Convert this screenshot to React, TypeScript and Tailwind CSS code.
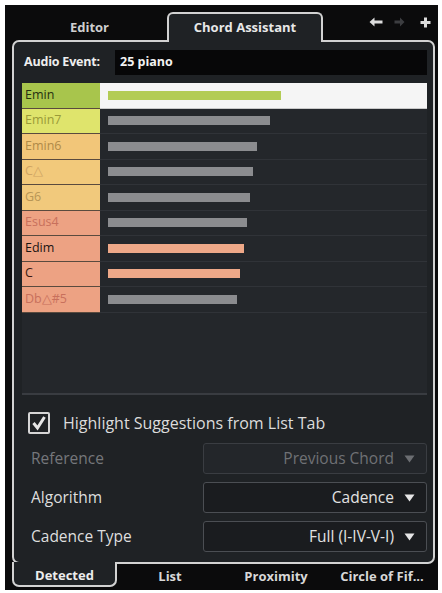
import React from "react";

type Chord = {
  name: string;
  cell: string;
  text: string;
  bar: string;
  width: number;
  selected?: boolean;
};

const chords: Chord[] = [
  { name: "Emin", cell: "bg-[#a8c54c]", text: "text-[#263010]", bar: "bg-[#b3cc55]", width: 173, selected: true },
  { name: "Emin7", cell: "bg-[#dfe46c]", text: "text-[#9a9a38]", bar: "bg-[#8b8c8f]", width: 162 },
  { name: "Emin6", cell: "bg-[#f2c679]", text: "text-[#b08a48]", bar: "bg-[#8b8c8f]", width: 149 },
  { name: "C\u25B3", cell: "bg-[#f2c97b]", text: "text-[#cfa463]", bar: "bg-[#8b8c8f]", width: 145 },
  { name: "G6", cell: "bg-[#f1c97c]", text: "text-[#b89656]", bar: "bg-[#8b8c8f]", width: 142 },
  { name: "Esus4", cell: "bg-[#eda283]", text: "text-[#c8705c]", bar: "bg-[#8b8c8f]", width: 139 },
  { name: "Edim", cell: "bg-[#eda283]", text: "text-[#1c1412]", bar: "bg-[#eea888]", width: 136 },
  { name: "C", cell: "bg-[#eda283]", text: "text-[#3a1a12]", bar: "bg-[#eea888]", width: 132 },
  { name: "Db\u25B3#5", cell: "bg-[#eda283]", text: "text-[#c8705c]", bar: "bg-[#8b8c8f]", width: 129 },
];

const font = { fontFamily: '"Open Sans", "Noto Sans", sans-serif' };

function DownTriangle({ dim }: { dim?: boolean }) {
  return (
    <svg width="11" height="8" viewBox="0 0 11 8" className="ml-[10px] shrink-0">
      <path d="M0.5 0.5 H10.5 L5.5 7.5 Z" fill={dim ? "#6c6e72" : "#e6e6e6"} />
    </svg>
  );
}

function Dropdown({
  label,
  value,
  disabled,
}: {
  label: string;
  value: string;
  disabled?: boolean;
}) {
  return (
    <div className="flex items-center h-[31px]">
      <div
        className={`w-[181px] pl-[9px] text-[15.5px] ${disabled ? "text-[#75777b]" : "text-[#dedede]"}`}
      >
        {label}
      </div>
      <div
        className={`flex-1 h-full flex items-center justify-end pr-[11px] rounded-[3px] border text-[15.5px] ${
          disabled
            ? "border-[#3a3d42] bg-[#23262a] text-[#6f7175]"
            : "border-[#4b4e53] bg-[#1a1c1f] text-[#e2e2e2]"
        }`}
      >
        <span>{value}</span>
        <DownTriangle dim={disabled} />
      </div>
    </div>
  );
}

export default function App() {
  return (
    <div className="w-[442px] h-[593px] bg-white pt-[5px] pl-[5px] pr-[4px] pb-[3px]" style={font}>
      <div className="h-full bg-[#0b0b0c] flex flex-col pl-[7px] pr-[3px] pt-[7px]">
        {/* top tab strip */}
        <div className="flex h-[28px] shrink-0">
          <div className="w-[155px] flex items-center justify-center pt-[3px] text-[13px] font-bold text-[#cfcfcf]">
            Editor
          </div>
          <div className="relative z-10 w-[156px] h-[30px] border-2 border-b-0 border-[#d2d2d2] rounded-t-[6px] bg-[#1f2225] flex items-center justify-center pb-[1px] text-[13px] font-bold text-[#e8e8e8]">
            Chord Assistant
          </div>
          <div className="flex-1 flex items-start justify-end pt-[5px] pr-[4px] gap-[11px]">
            <svg width="14" height="10" viewBox="0 0 14 10">
              <path d="M5.5 0.5 L0.5 5 L5.5 9.5 V6.5 H13.5 V3.5 H5.5 Z" fill="#dcdcdc" />
            </svg>
            <svg width="11" height="10" viewBox="0 0 11 10">
              <path d="M6 0.5 L10.5 5 L6 9.5 V6.5 H0.5 V3.5 H6 Z" fill="#3c3d40" />
            </svg>
            <svg width="11" height="11" viewBox="0 0 11 11" className="ml-[4px]">
              <path d="M4 0.5 H7 V4 H10.5 V7 H7 V10.5 H4 V7 H0.5 V4 H4 Z" fill="#dcdcdc" />
            </svg>
          </div>
        </div>

        {/* panel */}
        <div className="h-[524px] shrink-0 border-2 border-[#d2d2d2] rounded-[7px] bg-[#1f2225] flex flex-col pl-[8px] pr-[6px] pt-[8px]">
          <div className="flex items-center h-[25px] shrink-0">
            <div className="w-[93px] pl-[2px] text-[12.5px] font-bold text-[#eeeeee] tracking-[-0.2px]">
              Audio Event:
            </div>
            <div className="flex-1 h-full bg-[#070708] flex items-center pl-[5px] text-[12.5px] font-bold text-[#f2f2f2]">
              25 piano
            </div>
          </div>

          {/* chord list */}
          <div className="mt-[8px] h-[312px] shrink-0 bg-[#24272b] border-b-2 border-[#393c41] flex flex-col">
            {chords.map((c) => (
              <div key={c.name} className="flex h-[25.5px] shrink-0">
                <div
                  className={`w-[78px] ${c.cell} ${c.text} border-b border-[#5a4a3e] flex items-center pl-[3px] text-[12.5px]`}
                >
                  {c.name}
                </div>
                <div
                  className={`flex-1 flex items-center pl-[8px] border-b ${
                    c.selected ? "bg-[#f5f5f5] border-[#c9c9c9]" : "border-[#303338]"
                  }`}
                >
                  <div className={`h-[9px] ${c.bar}`} style={{ width: c.width }} />
                </div>
              </div>
            ))}
          </div>

          {/* options */}
          <div className="flex items-center mt-[16px] h-[23px] pl-[6px]">
            <div className="w-[22px] h-[22px] border-2 border-[#d6d6d6] rounded-[2px] flex items-center justify-center bg-[#1f2225]">
              <svg width="16" height="16" viewBox="0 0 16 16">
                <path d="M2.5 8 L6.5 13 L13.5 2" stroke="#e6e6e6" strokeWidth="3" fill="none" />
              </svg>
            </div>
            <span className="ml-[13px] text-[16px] text-[#dcdcdc]">Highlight Suggestions from List Tab</span>
          </div>

          <div className="mt-[9px] flex flex-col gap-[8px]">
            <Dropdown label="Reference" value="Previous Chord" disabled />
            <Dropdown label="Algorithm" value="Cadence" />
            <Dropdown label="Cadence Type" value="Full (I-IV-V-I)" />
          </div>
        </div>

        {/* bottom tab strip */}
        <div className="flex h-[26px] shrink-0">
          <div className="relative z-10 -mt-[2px] w-[105px] h-[25px] border-2 border-t-0 border-[#d2d2d2] rounded-b-[7px] bg-[#1f2225] flex items-center justify-center pt-[4px] text-[13px] font-bold text-[#ececec]">
            Detected
          </div>
          <div className="flex-1 grid grid-cols-3">
            <div className="flex items-center justify-center text-[13px] font-bold text-[#d8d8d8]">List</div>
            <div className="flex items-center justify-center text-[13px] font-bold text-[#d8d8d8]">Proximity</div>
            <div className="flex items-center justify-center text-[13px] font-bold text-[#d8d8d8]">Circle of Fif...</div>
          </div>
        </div>
      </div>
    </div>
  );
}
